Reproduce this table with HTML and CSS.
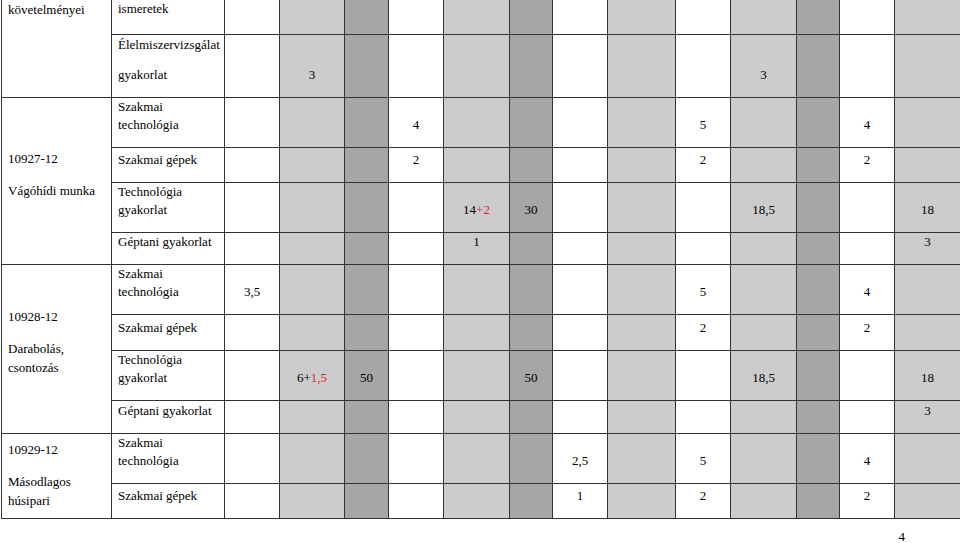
FILE: index.html
```html
<!DOCTYPE html>
<html lang="hu">
<head>
<meta charset="utf-8">
<title>Követelmények</title>
<link rel="stylesheet" href="styles.css">
</head>
<body>
<div class="page">
<table class="grid">
  <colgroup>
    <col class="c1"><col class="c2"><col class="w55"><col class="w65 lt"><col class="w44 dk"><col class="w55"><col class="w66 lt"><col class="w43 dk"><col class="w55"><col class="w68 lt"><col class="w55"><col class="w66 lt"><col class="w43 dk"><col class="w55"><col class="w66 lt">
  </colgroup>
  <tr class="first h34">
    <td class="mod top" rowspan="2"><p>követelményei</p></td>
    <td class="lbl">ismeretek</td>
    <td></td><td></td><td></td><td></td><td></td><td></td><td></td><td></td><td></td><td></td><td></td><td></td><td></td>
  </tr>
  <tr class="h63">
    <td class="lbl"><span class="para">Élelmiszervizsgálat</span><span>gyakorlat</span></td>
    <td></td><td>3</td><td></td><td></td><td></td><td></td><td></td><td></td><td></td><td>3</td><td></td><td></td><td></td>
  </tr>
  <tr class="h50">
    <td class="mod" rowspan="4"><p>10927-12</p><p>Vágóhídi munka</p></td>
    <td class="lbl">Szakmai<br>technológia</td>
    <td></td><td></td><td></td><td>4</td><td></td><td></td><td></td><td></td><td>5</td><td></td><td></td><td>4</td><td></td>
  </tr>
  <tr class="h35">
    <td class="lbl">Szakmai gépek</td>
    <td></td><td></td><td></td><td>2</td><td></td><td></td><td></td><td></td><td>2</td><td></td><td></td><td>2</td><td></td>
  </tr>
  <tr class="h50">
    <td class="lbl">Technológia<br>gyakorlat</td>
    <td></td><td></td><td></td><td></td><td>14<span class="red">+2</span></td><td>30</td><td></td><td></td><td></td><td>18,5</td><td></td><td></td><td>18</td>
  </tr>
  <tr class="h32">
    <td class="lbl">Géptani gyakorlat</td>
    <td></td><td></td><td></td><td></td><td>1</td><td></td><td></td><td></td><td></td><td></td><td></td><td></td><td>3</td>
  </tr>
  <tr class="h49">
    <td class="mod" rowspan="4"><p>10928-12</p><p>Darabolás,<br>csontozás</p></td>
    <td class="lbl">Szakmai<br>technológia</td>
    <td>3,5</td><td></td><td></td><td></td><td></td><td></td><td></td><td></td><td>5</td><td></td><td></td><td>4</td><td></td>
  </tr>
  <tr class="h36">
    <td class="lbl">Szakmai gépek</td>
    <td></td><td></td><td></td><td></td><td></td><td></td><td></td><td></td><td>2</td><td></td><td></td><td>2</td><td></td>
  </tr>
  <tr class="h49">
    <td class="lbl">Technológia<br>gyakorlat</td>
    <td></td><td>6+<span class="red">1,5</span></td><td>50</td><td></td><td></td><td>50</td><td></td><td></td><td></td><td>18,5</td><td></td><td></td><td>18</td>
  </tr>
  <tr class="h33">
    <td class="lbl">Géptani gyakorlat</td>
    <td></td><td></td><td></td><td></td><td></td><td></td><td></td><td></td><td></td><td></td><td></td><td></td><td>3</td>
  </tr>
  <tr class="h50">
    <td class="mod low" rowspan="2"><p>10929-12</p><p>Másodlagos<br>húsipari</p></td>
    <td class="lbl">Szakmai<br>technológia</td>
    <td></td><td></td><td></td><td></td><td></td><td></td><td>2,5</td><td></td><td>5</td><td></td><td></td><td>4</td><td></td>
  </tr>
  <tr class="h35">
    <td class="lbl">Szakmai gépek</td>
    <td></td><td></td><td></td><td></td><td></td><td></td><td>1</td><td></td><td>2</td><td></td><td></td><td>2</td><td></td>
  </tr>
</table>
<div class="folio">4</div>
</div>
</body>
</html>
```
FILE: styles.css
```css
html, body {
  margin: 0;
  padding: 0;
  background: #ffffff;
}
body {
  font-family: "Liberation Serif", "Times New Roman", serif;
  font-size: 13px;
  color: #000000;
}
.page {
  padding-left: 1px;
}
.grid {
  border-collapse: collapse;
  table-layout: fixed;
  width: 959px;
}
.grid td {
  border: 1px solid #333333;
  padding: 0 0 13px 0;
  line-height: 18px;
  vertical-align: bottom;
  text-align: center;
  white-space: nowrap;
  overflow: visible;
}
.grid tr.first td {
  border-top: none;
  vertical-align: top;
  padding-bottom: 0;
}
.grid td.lbl {
  text-align: left;
  padding-left: 6px;
}
.grid td.mod {
  text-align: left;
  padding-left: 6px;
  padding-bottom: 0;
  vertical-align: middle;
  line-height: 19px;
}
.grid td.mod.top {
  vertical-align: top;
}
.grid td.mod.low {
  vertical-align: top;
  padding-top: 6px;
}
.mod p {
  margin: 0 0 13px;
}
.mod.top p {
  margin: 0;
}
.mod.low p:last-child {
  margin-bottom: 0;
}
.para {
  display: block;
  margin-bottom: 12px;
}
.lbl span {
  display: block;
}
.red {
  color: #e0242a;
}
col.c1 { width: 110px; }
col.c2 { width: 113px; }
col.w43 { width: 43px; }
col.w44 { width: 44px; }
col.w55 { width: 55px; }
col.w65 { width: 65px; }
col.w66 { width: 66px; }
col.w68 { width: 68px; }
col.lt { background: #cccccc; }
col.dk { background: #a6a6a6; }
.h32 { height: 32px; }
.h33 { height: 33px; }
.h34 { height: 34px; }
.h35 { height: 35px; }
.h36 { height: 36px; }
.h49 { height: 49px; }
.h50 { height: 50px; }
.h63 { height: 63px; }
.folio {
  text-align: right;
  padding-right: 55px;
  margin-top: 10px;
  line-height: 15px;
  font-size: 13px;
}
```
